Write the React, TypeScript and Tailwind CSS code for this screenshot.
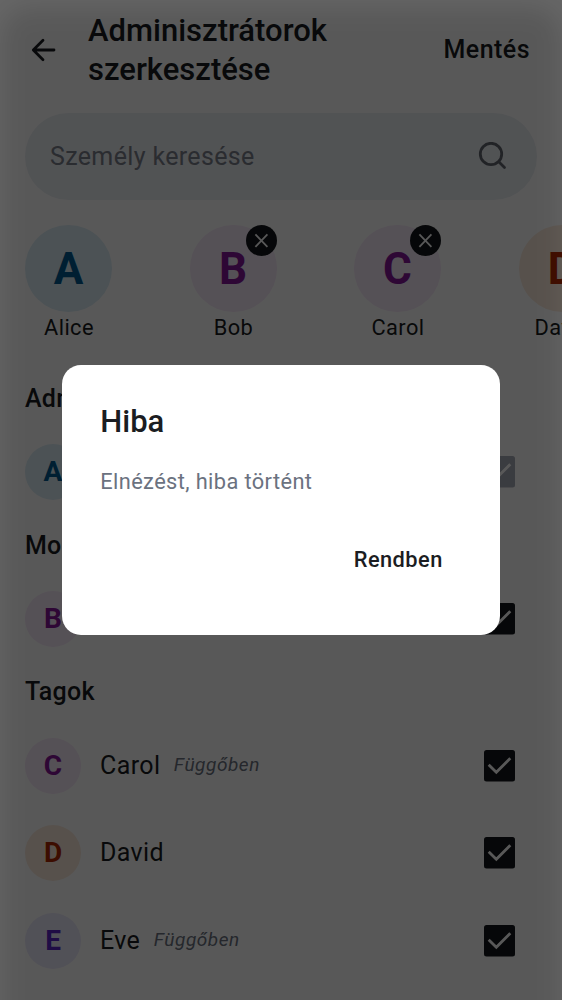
import React from "react";

type Tone = "blue" | "purple" | "orange" | "violet";

const tones: Record<Tone, string> = {
  blue: "bg-[#dcedf5] text-[#005b91]",
  purple: "bg-[#f6e8f8] text-[#86189a]",
  orange: "bg-[#fcebdd] text-[#b02800]",
  violet: "bg-[#eceafd] text-[#5b26c9]",
};

function Cross() {
  return (
    <span className="absolute right-0 top-0 flex size-[31px] items-center justify-center rounded-full bg-[#15181c]">
      <svg width="31" height="31" viewBox="0 0 31 31" fill="none" stroke="#fff" strokeWidth="1.8">
        <path d="M9.4 9.4 21.4 21.8M21.4 9.4 9.4 21.8" />
      </svg>
    </span>
  );
}

function Selected({ name, tone, removable }: { name: string; tone: Tone; removable?: boolean }) {
  return (
    <div className="flex w-[87px] shrink-0 flex-col items-center">
      <div className={`relative flex size-[87px] items-center justify-center rounded-full text-[44px] font-bold leading-none ${tones[tone]}`}>
        {name[0]}
        {removable && <Cross />}
      </div>
      <span className="mt-[2px] pl-px text-[21.8px] leading-[28px] tracking-[0.4px]">{name}</span>
    </div>
  );
}

function CheckBox({ disabled }: { disabled?: boolean }) {
  return (
    <svg width="31" height="32" viewBox="0 0 31 32" className={disabled ? "text-[#a9adb8]" : "text-[#15181c]"}>
      <rect width="31" height="31.5" rx="2.5" fill="currentColor" />
      <path d="M4.7 14.8 12.3 22.3 26.3 8.3" fill="none" stroke="#fff" strokeWidth="2.8" />
    </svg>
  );
}

function Member({ name, tone, pending, disabled }: { name: string; tone: Tone; pending?: boolean; disabled?: boolean }) {
  return (
    <div className="flex h-[87.5px] items-center pl-[25px] pr-[47px]">
      <div className={`flex size-[56px] shrink-0 items-center justify-center rounded-full text-[28px] font-bold leading-none ${tones[tone]}`}>
        {name[0]}
      </div>
      <span className="ml-[19px] text-[25px] tracking-[0.38px]">{name}</span>
      {pending && <span className="ml-[13.5px] text-[19px] italic tracking-[0.55px] text-[#6b7280]">Függőben</span>}
      <span className="ml-auto">
        <CheckBox disabled={disabled} />
      </span>
    </div>
  );
}

function SectionTitle({ children }: { children: React.ReactNode }) {
  return <h2 className="flex h-[59.3px] items-center pl-[25px] text-[25px] font-medium tracking-[0.25px]">{children}</h2>;
}

export default function App() {
  return (
    <div className="relative h-[1000px] w-[562px] overflow-hidden bg-white font-[Roboto,sans-serif] text-[#1b1d22]">
      <header className="flex h-[100px] items-center pl-[31px] pr-[32px]">
        <svg width="25" height="24" viewBox="0 0 25 24" fill="none" stroke="currentColor" strokeWidth="2.8" strokeLinecap="round" strokeLinejoin="round">
          <path d="M23 12H2.5M12 2.3 2.3 12 12 21.7" />
        </svg>
        <h1 className="ml-[32px] w-[300px] text-[31px] font-medium leading-[39px]">Adminisztrátorok szerkesztése</h1>
        <button className="ml-auto text-[25px] font-medium tracking-[0.45px]">Mentés</button>
      </header>
      <div className="mx-[25px] mt-[13px] flex h-[87px] items-center justify-between rounded-full bg-[#eceff3] pl-[25px] pr-[30px] text-[#7b808c]">
        <span className="text-[25px] tracking-[0.35px]">Személy keresése</span>
        <svg width="29" height="29" viewBox="0 0 29 29" fill="none" stroke="#62666f" strokeWidth="2.8" strokeLinecap="round">
          <circle cx="13" cy="12" r="10.7" />
          <path d="m21 20 5.5 5.5" />
        </svg>
      </div>
      <div className="mt-[25px] flex h-[144px] gap-[77.5px] pl-[25px]">
        <Selected name="Alice" tone="blue" />
        <Selected name="Bob" tone="purple" removable />
        <Selected name="Carol" tone="purple" removable />
        <Selected name="David" tone="orange" />
      </div>
      <SectionTitle>Adminisztrátorok</SectionTitle>
      <Member name="Alice" tone="blue" disabled />
      <SectionTitle>Moderátorok</SectionTitle>
      <Member name="Bob" tone="purple" />
      <SectionTitle>Tagok</SectionTitle>
      <Member name="Carol" tone="purple" pending />
      <Member name="David" tone="orange" />
      <Member name="Eve" tone="violet" pending />

      <div className="absolute inset-0 flex items-center justify-center overflow-hidden bg-black/60">
        <div className="absolute inset-x-[1px] -bottom-12 top-[7px] rounded-[30px] bg-black/13 blur-[12px]" />
        <div role="dialog" className="relative h-[270px] w-[437.5px] rounded-[19px] bg-white pl-[38px] pr-[57px] pt-[36px]">
          <h2 className="text-[31px] font-medium leading-[42px]">Hiba</h2>
          <p className="mt-[24px] text-[21.8px] leading-[30px] tracking-[0.39px] text-[#6b7280]">Elnézést, hiba történt</p>
          <div className="mt-[48px] flex justify-end">
            <button className="text-[21.8px] font-medium leading-[30px] tracking-[0.45px]">Rendben</button>
          </div>
        </div>
      </div>
    </div>
  );
}
